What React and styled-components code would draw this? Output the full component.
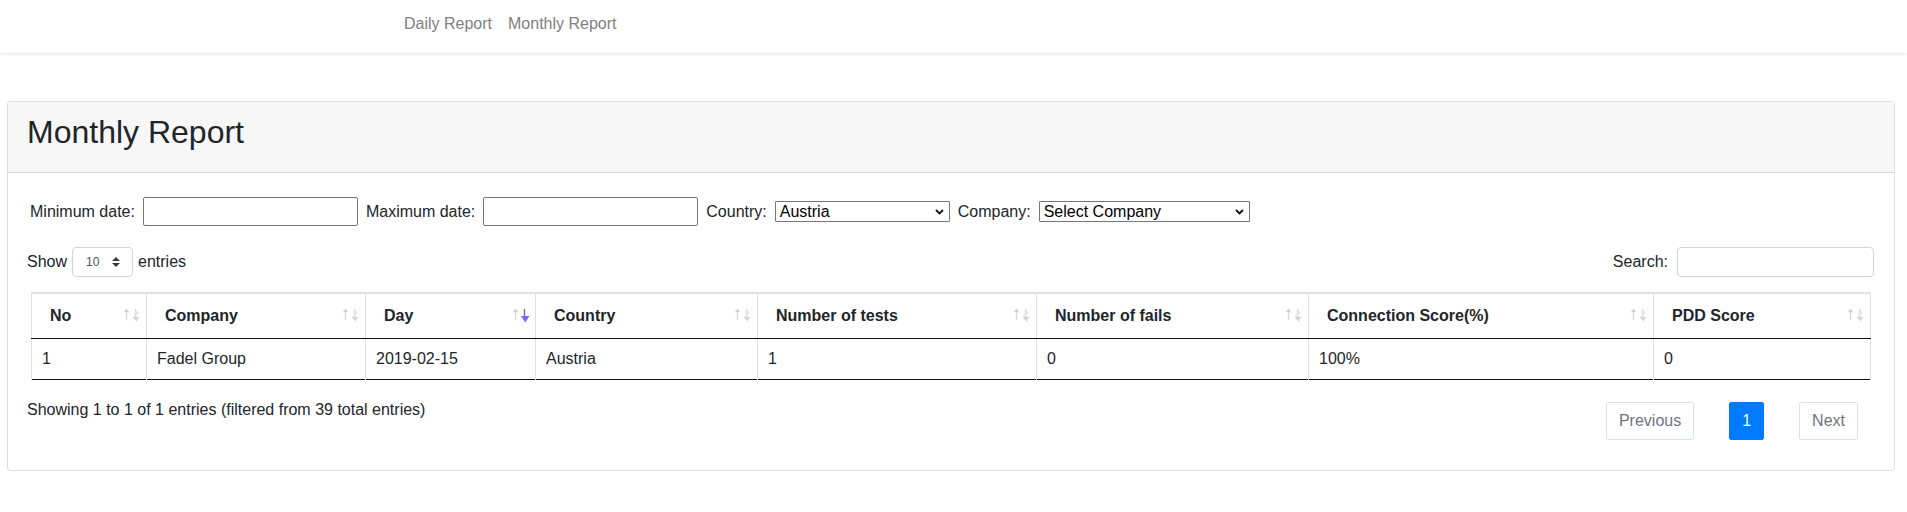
import React from "react";
import styled, { createGlobalStyle, css } from "styled-components";

const GlobalStyle = createGlobalStyle`
  body {
    margin: 0;
    background: #fff;
    font-family: "Liberation Sans", Arial, sans-serif;
    font-size: 16px;
    line-height: 1.5;
    color: #212529;
  }
  * { box-sizing: border-box; }
`;

const Navbar = styled.nav`
  height: 53px;
  background: #fff;
  box-shadow: 0 1px 3px rgba(0, 0, 0, 0.1);
  display: flex;
  padding: 9px 0 0 396px;
`;

const NavLink = styled.a`
  padding: 3px 8px 0;
  line-height: 24px;
  color: #808080;
  text-decoration: none;
`;

const Page = styled.main`
  padding: 48px 12px 40px 7px;
`;

const Card = styled.section`
  border: 1px solid rgba(0, 0, 0, 0.125);
  border-radius: 4px;
  background: #fff;
`;

const CardHeader = styled.header`
  background: #f7f7f7;
  border-bottom: 1px solid rgba(0, 0, 0, 0.125);
  padding: 11px 20px 13px 19px;
`;

const Title = styled.h2`
  margin: 0 0 8px;
  font-size: 32px;
  font-weight: 400;
  line-height: 1.2;
`;

const CardBody = styled.div`
  padding: 20px 20px 30px;
`;

const FilterRow = styled.div`
  display: flex;
  align-items: center;
  gap: 8px;
  margin: 4px 0 0 2px;
  height: 29px;
`;

const Label = styled.span`
  white-space: nowrap;
`;

const DateInput = styled.input`
  width: 215px;
  height: 29px;
  border: 1px solid #767676;
  border-radius: 2px;
  font: inherit;
  padding: 0 4px;
`;

const NativeSelect = styled.div`
  width: ${(p) => p.$width}px;
  height: 21px;
  border: 1px solid #767676;
  border-radius: 1px;
  display: flex;
  align-items: center;
  justify-content: space-between;
  padding: 0 5px 0 4px;
  line-height: 19px;
  color: #000;
`;

const ControlsRow = styled.div`
  display: flex;
  justify-content: space-between;
  align-items: center;
  margin: 21px 0 0 -1px;
  height: 30px;
`;

const LengthControl = styled.label`
  display: flex;
  align-items: center;
  gap: 5px;
`;

const LengthSelect = styled.div`
  width: 61px;
  height: 30px;
  border: 1px solid #ced4da;
  border-radius: 4px;
  display: flex;
  align-items: center;
  justify-content: space-between;
  padding: 0 12px 0 13px;
  font-size: 12px;
  color: #495057;
`;

const SearchControl = styled.label`
  display: flex;
  align-items: center;
  gap: 9px;
`;

const SearchInput = styled.input`
  width: 197px;
  height: 30px;
  border: 1px solid #ced4da;
  border-radius: 4px;
  font: inherit;
`;

const Table = styled.table`
  margin: 15px 0 0 3px;
  width: 1839px;
  table-layout: fixed;
  border-collapse: collapse;
  border-top: 2px solid #dee2e6;
  border-bottom: 1px solid #111;
`;

const Th = styled.th`
  position: relative;
  text-align: left;
  font-weight: 700;
  padding: 10px 30px 10px 18px;
  line-height: 24px;
  border-left: 1px solid #dee2e6;
  border-right: 1px solid #dee2e6;
  border-bottom: 1px solid #111;
  white-space: nowrap;

  &::before,
  &::after {
    position: absolute;
    top: 50%;
    margin-top: -9px;
    line-height: 16px;
    font-weight: 400;
    font-size: 15px;
    font-family: "DejaVu Sans", sans-serif;
    opacity: 0.25;
    transform: scaleX(0.7);
  }
  &::before {
    content: "\\2191";
    right: 13px;
  }
  &::after {
    content: "\\2193";
    right: 4px;
  }
  ${(p) =>
    p.$desc &&
    css`
      &::after {
        opacity: 1;
      }
    `}
`;

const Td = styled.td`
  padding: 8px 10px;
  line-height: 24px;
  border-left: 1px solid #dee2e6;
  border-right: 1px solid #dee2e6;
`;

const SortMark = styled.svg`
  position: absolute;
  z-index: 1;
  right: 0;
  top: 50%;
  margin-top: -10px;
`;

const Footer = styled.div`
  display: flex;
  justify-content: space-between;
  align-items: flex-start;
  margin-top: 18px;
`;

const Info = styled.div`
  line-height: 24px;
  margin-left: -1px;
`;

const Pagination = styled.div`
  display: flex;
  gap: 35px;
  margin: 4px 16px 0 0;
`;

const PageButton = styled.a`
  height: 38px;
  padding: 6px 12px;
  line-height: 24px;
  border: 1px solid ${(p) => (p.$active ? "#007bff" : "#dee2e6")};
  border-radius: 2px;
  background: ${(p) => (p.$active ? "#007bff" : "#fff")};
  color: ${(p) => (p.$active ? "#fff" : "#6c757d")};
  text-decoration: none;
`;

const Chevron = () => (
  <svg width="9" height="6" viewBox="0 0 9 6">
    <path d="M1 1l3.5 3.5L8 1" fill="none" stroke="#111" strokeWidth="1.8" />
  </svg>
);

const UpDown = () => (
  <svg width="8" height="10" viewBox="0 0 8 10">
    <path d="M0 4L4 0l4 4z M0 6h8l-4 4z" fill="#343a40" />
  </svg>
);

const SortIcon = ({ desc }) => (
  <SortMark width="19" height="19" viewBox="0 0 19 19">
    {desc ? (
      <path d="M5 10h8.5l-4.25 6.5z" fill="#6f6fee" />
    ) : (
      <>
        <path d="M7 8h5l-2.5-4z" fill="#e4e4e4" />
        <path d="M7 11h5l-2.5 5z" fill="#d6d6d6" />
      </>
    )}
  </SortMark>
);

const columns = [
  { title: "No", width: 115 },
  { title: "Company", width: 219 },
  { title: "Day", width: 170, desc: true },
  { title: "Country", width: 222 },
  { title: "Number of tests", width: 279 },
  { title: "Number of fails", width: 272 },
  { title: "Connection Score(%)", width: 345 },
  { title: "PDD Score", width: 217 },
];

const rows = [["1", "Fadel Group", "2019-02-15", "Austria", "1", "0", "100%", "0"]];

export default function App() {
  return (
    <>
      <GlobalStyle />
      <Navbar>
        <NavLink href="#">Daily Report</NavLink>
        <NavLink href="#">Monthly Report</NavLink>
      </Navbar>
      <Page>
        <Card>
          <CardHeader>
            <Title>Monthly Report</Title>
          </CardHeader>
          <CardBody>
            <FilterRow>
              <Label>Minimum date:</Label>
              <DateInput type="text" />
              <Label>Maximum date:</Label>
              <DateInput type="text" />
              <Label>Country:</Label>
              <NativeSelect $width={175}>
                Austria
                <Chevron />
              </NativeSelect>
              <Label>Company:</Label>
              <NativeSelect $width={211}>
                Select Company
                <Chevron />
              </NativeSelect>
            </FilterRow>

            <ControlsRow>
              <LengthControl>
                Show
                <LengthSelect>
                  10
                  <UpDown />
                </LengthSelect>
                entries
              </LengthControl>
              <SearchControl>
                Search:
                <SearchInput type="search" />
              </SearchControl>
            </ControlsRow>

            <Table>
              <colgroup>
                {columns.map((c) => (
                  <col key={c.title} style={{ width: c.width }} />
                ))}
              </colgroup>
              <thead>
                <tr>
                  {columns.map((c) => (
                    <Th key={c.title} $desc={c.desc}>
                      {c.title}
                      <SortIcon desc={c.desc} />
                    </Th>
                  ))}
                </tr>
              </thead>
              <tbody>
                {rows.map((r, i) => (
                  <tr key={i}>
                    {r.map((v, j) => (
                      <Td key={j}>{v}</Td>
                    ))}
                  </tr>
                ))}
              </tbody>
            </Table>

            <Footer>
              <Info>Showing 1 to 1 of 1 entries (filtered from 39 total entries)</Info>
              <Pagination>
                <PageButton href="#">Previous</PageButton>
                <PageButton href="#" $active>
                  1
                </PageButton>
                <PageButton href="#">Next</PageButton>
              </Pagination>
            </Footer>
          </CardBody>
        </Card>
      </Page>
    </>
  );
}
